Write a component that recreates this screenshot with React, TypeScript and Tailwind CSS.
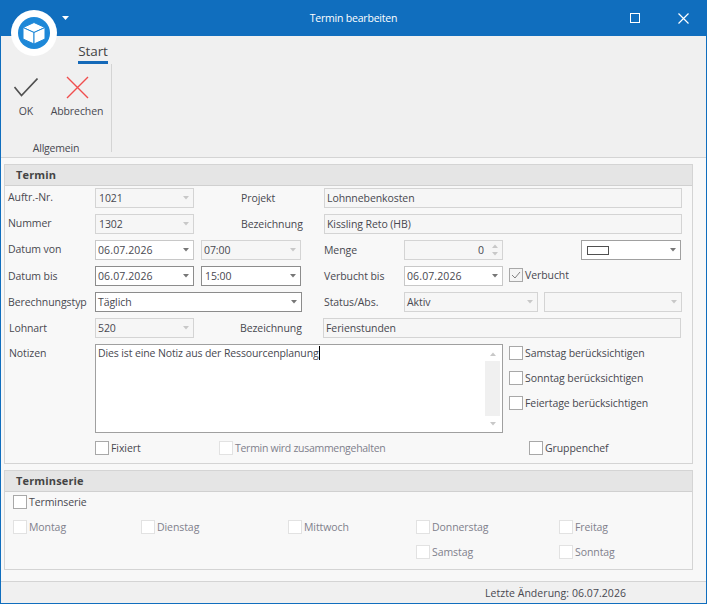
import React from 'react';

function Arrow({ active = false }: { active?: boolean }) {
  return (
    <svg width="6" height="4" viewBox="0 0 6 4" className="shrink-0">
      <path d="M0 0h6L3 3.5z" fill={active ? '#777777' : '#c8c8c8'} />
    </svg>
  );
}

function ArrowUp() {
  return (
    <svg width="6" height="4" viewBox="0 0 6 4" className="shrink-0">
      <path d="M3 .5 6 4H0z" fill="#c8c8c8" />
    </svg>
  );
}

interface BoxProps {
  width: string;
  value?: string;
  arrow?: boolean;
  mode?: 'disabled' | 'normal' | 'active';
  indent?: boolean;
  date?: boolean;
  className?: string;
}

function Box({ width, value, arrow = true, mode = 'disabled', indent = false, date = false, className = '' }: BoxProps) {
  const look =
    mode === 'active'
      ? 'border-[#8c8c8c] bg-white'
      : mode === 'normal'
        ? 'border-[#c8c8c8] bg-white'
        : 'border-[#d4d4d4] bg-[#f6f6f6]';
  return (
    <div className={`flex h-5 shrink-0 items-center justify-between border pl-[2px] pr-[4px] ${look} ${width} ${className}`}>
      <span className={`${indent ? 'pl-[1px]' : ''} ${date ? 'tracking-[0.12px]' : ''}`}>{value}</span>
      {arrow && <Arrow active={mode !== 'disabled'} />}
    </div>
  );
}

function CheckBox({ label, muted = false, checked = false, className = '' }: { label: string; muted?: boolean; checked?: boolean; className?: string }) {
  return (
    <div className={`flex h-[14px] shrink-0 items-center gap-[2px] ${className}`}>
      <div className={`flex size-[14px] items-center justify-center border ${muted ? 'border-[#e2e2e2] bg-white' : checked ? 'border-[#a8a8a8] bg-[#f4f4f4]' : 'border-[#a8a8a8] bg-white'}`}>
        {checked && (
          <svg width="10" height="8" viewBox="0 0 10 8" fill="none">
            <path d="M1 4l3 3 5-6" stroke="#808080" strokeWidth="1" />
          </svg>
        )}
      </div>
      <span className={muted ? 'text-[#80808c]' : ''}>{label}</span>
    </div>
  );
}

function Row({ children, className = '' }: { children: React.ReactNode; className?: string }) {
  return <div className={`flex h-5 items-center ${className}`}>{children}</div>;
}

function PanelHeader({ title }: { title: string }) {
  return (
    <div className="flex h-[21px] items-center border-b border-[#d0d0d0] bg-[#e5e5e5] pl-[11px] text-[11px] font-bold tracking-[0.15px] text-[#444444]">
      {title}
    </div>
  );
}

export default function App() {
  return (
    <div className="relative flex h-[604px] w-[707px] flex-col overflow-hidden border-x border-b border-[#106ebe] bg-[#f8f8f8] font-['Open_Sans',sans-serif] text-[10.5px] leading-[14px] tracking-[-0.08px] text-[#484850]">
      {/* title bar */}
      <div className="relative flex h-9 shrink-0 items-center justify-center bg-[#106ebe] text-white">
        <span className="tracking-[-0.2px]">Termin bearbeiten</span>
        <div className="absolute left-[10px] top-[10px] flex size-[46px] items-center justify-center rounded-full bg-white">
          <div className="flex size-[32px] items-center justify-center rounded-full bg-[#1e88d8]">
            <svg width="24" height="24" viewBox="0 0 24 24" stroke="#1e88d8" strokeWidth="1" strokeLinejoin="round">
              <path d="M12 1.5 23 6.5 12 11.5 1 6.5z" fill="white" />
              <path d="M1 6.5 12 11.5V23L1 18z" fill="white" />
              <path d="M23 6.5 12 11.5V23l11-5z" fill="white" />
            </svg>
          </div>
        </div>
        <svg width="7" height="4" viewBox="0 0 7 4" className="absolute left-[61px] top-4">
          <path d="M0 0h7L3.5 4z" fill="white" />
        </svg>
        <div className="absolute left-[629px] top-[13px] size-[10px] border border-white" />
        <svg width="11" height="11" viewBox="0 0 11 11" className="absolute left-[677px] top-[13px]" stroke="white" strokeWidth="1.2">
          <path d="M.5.5l10 10M10.5.5l-10 10" />
        </svg>
      </div>

      {/* ribbon */}
      <div className="flex h-[122px] shrink-0 flex-col border-b border-[#d4d4d4] bg-[#f0f0f0]">
        <div className="ml-[77px] mt-2 w-[30px] border-b-[3px] border-[#1569b8] pb-[2px] text-center text-[13.5px] leading-[15px] text-[#444444]">
          Start
        </div>
        <div className="flex">
          <div className="flex h-[88px] w-[111px] flex-col items-center border-r border-[#d4d4d4]">
            <div className="flex w-full flex-1">
              <div className="ml-[13px] flex w-[24px] flex-col items-center">
                <svg width="24" height="19" viewBox="0 0 24 19" fill="none" className="mt-[14px]">
                  <path d="M.5 9l7 8.5L23.5.5" stroke="#505050" strokeWidth="1.6" />
                </svg>
                <span className="mt-[7px]">OK</span>
              </div>
              <div className="ml-[13px] flex w-[52px] flex-col items-center">
                <svg width="23" height="23" viewBox="0 0 23 23" fill="none" stroke="#f04e4e" strokeWidth="1.4" className="mt-[12px]">
                  <path d="M1 1l21 21M22 1 1 22" />
                </svg>
                <span className="mt-[5px]">Abbrechen</span>
              </div>
            </div>
            <span className="-mb-[3px] tracking-[-0.2px]">Allgemein</span>
          </div>
        </div>
      </div>

      {/* form */}
      <div className="ml-[3px] mr-[13px] mt-[6px] h-[300px] shrink-0 border border-[#d4d4d4]">
        <PanelHeader title="Termin" />
        <div className="flex flex-col gap-[6px] pl-[3px] pt-[2px]">
          <Row>
            <span className="-mt-[2px] w-[87px]">Auftr.-Nr.</span>
            <Box width="w-[99px]" value="1021" indent />
            <span className="ml-[47px] w-[83px]">Projekt</span>
            <Box width="w-[358px]" value="Lohnnebenkosten" arrow={false} />
          </Row>
          <Row>
            <span className="-mt-[2px] w-[87px]">Nummer</span>
            <Box width="w-[99px]" value="1302" indent />
            <span className="ml-[47px] w-[83px]">Bezeichnung</span>
            <Box width="w-[358px]" value="Kissling Reto (HB)" arrow={false} />
          </Row>
          <Row>
            <span className="-mt-[2px] w-[87px]">Datum von</span>
            <Box width="w-[99px]" value="06.07.2026" mode="normal" date />
            <Box width="w-[100px]" value="07:00" className="ml-[7px]" />
            <span className="ml-[23px] w-[80px]">Menge</span>
            <div className="flex h-5 w-[99px] items-center justify-end border border-[#d4d4d4] bg-[#f6f6f6] pr-[4px]">
              <span className="mr-[8px]">0</span>
              <div className="flex flex-col gap-[4px]">
                <ArrowUp />
                <Arrow />
              </div>
            </div>
            <div className="ml-[78px] flex h-5 w-[100px] items-center justify-between border border-[#a0a0a0] bg-white pl-[5px] pr-[4px]">
              <div className="h-[9px] w-[22px] border border-[#505050] bg-white" />
              <Arrow active />
            </div>
          </Row>
          <Row>
            <span className="w-[87px]">Datum bis</span>
            <Box width="w-[99px]" value="06.07.2026" mode="active" date />
            <Box width="w-[100px]" value="15:00" mode="active" indent className="ml-[7px]" />
            <span className="ml-[23px] w-[80px]">Verbucht bis</span>
            <Box width="w-[99px]" value="06.07.2026" mode="normal" date />
            <CheckBox label="Verbucht" checked className="-mt-[2px] ml-[6px]" />
          </Row>
          <Row>
            <span className="w-[87px]">Berechnungstyp</span>
            <Box width="w-[207px]" value="Täglich" mode="active" />
            <span className="ml-[22px] w-[80px]">Status/Abs.</span>
            <Box width="w-[134px]" value="Aktiv" />
            <Box width="w-[138px]" className="ml-[6px]" />
          </Row>
          <Row>
            <span className="w-[87px] pl-px">Lohnart</span>
            <Box width="w-[99px]" value="520" />
            <span className="ml-[46px] w-[83px]">Bezeichnung</span>
            <Box width="w-[358px]" value="Ferienstunden" arrow={false} />
          </Row>
        </div>

        <div className="flex pl-[3px] pt-[6px]">
          <span className="mt-[2px] w-[87px] pl-px">Notizen</span>
          <div className="flex h-[89px] w-[408px] justify-between border border-[#a0a0a0] bg-white py-px pl-[2px] pr-[2px]">
            <div className="flex h-[14px] items-center">
              <span className="tracking-[-0.12px]">Dies ist eine Notiz aus der Ressourcenplanung</span>
              <div className="h-[14px] w-px bg-black" />
            </div>
            <div className="flex w-[15px] flex-col justify-between bg-[#f0f0f0]">
              <div className="flex h-[15px] items-center justify-center bg-white">
                <ArrowUp />
              </div>
              <div className="flex h-[15px] items-center justify-center bg-white">
                <Arrow />
              </div>
            </div>
          </div>
          <div className="ml-[6px] mt-[2px] flex flex-col gap-[11px]">
            <CheckBox label="Samstag berücksichtigen" />
            <CheckBox label="Sonntag berücksichtigen" />
            <CheckBox label="Feiertage berücksichtigen" />
          </div>
        </div>

        <div className="flex pl-[90px] pt-2">
          <CheckBox label="Fixiert" className="w-[124px]" />
          <CheckBox label="Termin wird zusammengehalten" muted className="w-[310px] tracking-[-0.28px]" />
          <CheckBox label="Gruppenchef" />
        </div>
      </div>

      {/* series */}
      <div className="ml-[3px] mr-[13px] mt-[6px] h-[100px] shrink-0 border border-[#d4d4d4]">
        <PanelHeader title="Terminserie" />
        <div className="flex flex-col pl-2 pt-[3px]">
          <CheckBox label="Terminserie" />
          <div className="mt-[11px] flex">
            <CheckBox label="Montag" muted className="w-[128px]" />
            <CheckBox label="Dienstag" muted className="w-[147px]" />
            <CheckBox label="Mittwoch" muted className="w-[128px]" />
            <CheckBox label="Donnerstag" muted className="w-[143px]" />
            <CheckBox label="Freitag" muted />
          </div>
          <div className="ml-[403px] mt-[11px] flex">
            <CheckBox label="Samstag" muted className="w-[143px]" />
            <CheckBox label="Sonntag" muted />
          </div>
        </div>
      </div>

      {/* status bar */}
      <div className="mt-[11px] flex flex-1 items-center justify-end border-t border-[#d4d4d4] bg-[#f0f0f0] pr-[80px] tracking-[0.05px]">
        Letzte Änderung: 06.07.2026
      </div>
    </div>
  );
}
